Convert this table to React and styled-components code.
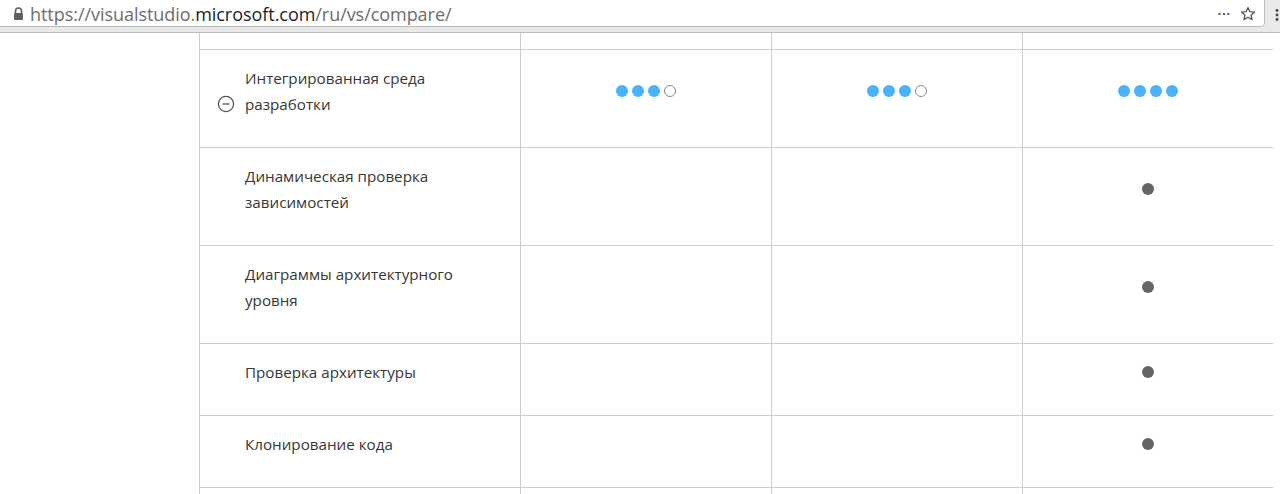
import styled, { createGlobalStyle } from "styled-components";

const GlobalStyle = createGlobalStyle`
  html, body {
    margin: 0;
    padding: 0;
    background: #fff;
    font-family: "Open Sans", "Noto Sans", sans-serif;
  }
`;

const rows = [
  { title: ["Интегрированная среда", "разработки"], group: true, cells: [3, 3, 4] },
  { title: ["Динамическая проверка", "зависимостей"], cells: [null, null, "dot"] },
  { title: ["Диаграммы архитектурного", "уровня"], cells: [null, null, "dot"] },
  { title: ["Проверка архитектуры"], cells: [null, null, "dot"] },
  { title: ["Клонирование кода"], cells: [null, null, "dot"] },
];

function LockIcon() {
  return (
    <svg width="11" height="13" viewBox="0 0 11 13">
      <path d="M2.5 6V4a3 3 0 0 1 6 0v2" fill="none" stroke="#5f5f5f" strokeWidth="1.6" />
      <rect x="1" y="6" width="9" height="7" rx="1" fill="#5f5f5f" />
    </svg>
  );
}

function StarIcon() {
  return (
    <svg width="16" height="16" viewBox="0 0 16 16">
      <path
        d="M8 1.6l1.9 4.1 4.5.5-3.4 3 1 4.4L8 11.3l-4 2.3 1-4.4-3.4-3 4.5-.5z"
        fill="none"
        stroke="#555"
        strokeWidth="1.3"
        strokeLinejoin="round"
      />
    </svg>
  );
}

function MenuIcon() {
  return (
    <svg width="4" height="14" viewBox="0 0 4 14">
      <circle cx="2" cy="2.5" r="1.4" fill="#444" />
      <circle cx="2" cy="7" r="1.4" fill="#444" />
      <circle cx="2" cy="11.5" r="1.4" fill="#444" />
    </svg>
  );
}

function MinusCircle() {
  return (
    <svg width="18" height="18" viewBox="0 0 18 18">
      <circle cx="9" cy="9" r="7.6" fill="none" stroke="#555" strokeWidth="1.3" />
      <line x1="5.5" y1="9" x2="12.5" y2="9" stroke="#555" strokeWidth="1.3" />
    </svg>
  );
}

function Rating({ value }) {
  return (
    <Dots>
      {[0, 1, 2, 3].map((i) => (
        <Dot key={i} $filled={i < value} />
      ))}
    </Dots>
  );
}

function App() {
  return (
    <>
      <GlobalStyle />
      <Toolbar>
        <UrlBox>
          <LockIcon />
          <Url>
            https://visualstudio.<b>microsoft.com</b>/ru/vs/compare/
          </Url>
          <UrlActions>
            <More>•••</More>
            <StarIcon />
          </UrlActions>
        </UrlBox>
        <Kebab>
          <MenuIcon />
        </Kebab>
      </Toolbar>
      <Page>
        <Grid>
          <Row $top>
            <Cell />
            <Cell />
            <Cell />
            <Cell />
          </Row>
          {rows.map((r, i) => (
            <Row key={i}>
              <TitleCell>
                <Toggle>{r.group && <MinusCircle />}</Toggle>
                <Title>
                  {r.title.map((t, j) => (
                    <div key={j}>{t}</div>
                  ))}
                </Title>
              </TitleCell>
              {r.cells.map((c, j) => (
                <Cell key={j}>
                  {typeof c === "number" && <Rating value={c} />}
                  {c === "dot" && <Check />}
                </Cell>
              ))}
            </Row>
          ))}
          <Row $top>
            <Cell />
            <Cell />
            <Cell />
            <Cell />
          </Row>
        </Grid>
      </Page>
    </>
  );
}

const Toolbar = styled.header`
  background: #e9e9e9;
  border-bottom: 1px solid #bdbdbd;
  display: flex;
  align-items: flex-start;
  box-sizing: border-box;
  height: 33px;
`;

const UrlBox = styled.div`
  flex: 0 0 1271px;
  height: 29px;
  margin-left: -6px;
  margin-top: -2px;
  background: #fff;
  border: 1px solid #bcbcbc;
  border-radius: 0 0 4px 0;
  box-sizing: border-box;
  display: flex;
  align-items: center;
  padding: 2px 8px 0 18px;
  gap: 6px;
`;

const Url = styled.span`
  font-size: 18px;
  color: #6d6d6d;
  letter-spacing: -0.05px;
  flex: 1;

  b {
    font-weight: normal;
    color: #1e1e1e;
  }
`;

const UrlActions = styled.div`
  display: flex;
  align-items: center;
  gap: 9px;
`;

const More = styled.span`
  font-size: 9px;
  color: #444;
  letter-spacing: 1px;
`;

const Kebab = styled.span`
  display: flex;
  margin-left: 10px;
  margin-top: 8px;
`;

const Page = styled.main`
  padding-left: 199px;
`;

const Grid = styled.div`
  width: 1074px;
`;

const Row = styled.div`
  display: grid;
  grid-template-columns: 321px 251px 251px 251px;
  border-bottom: 1px solid #cdcdcd;
  height: ${(p) => (p.$top ? "16px" : "auto")};
  overflow: hidden;
`;

const Cell = styled.div`
  border-left: 1px solid #cdcdcd;
  display: flex;
  align-items: center;
  justify-content: center;
  padding: 15px 0 30px;
  min-height: 26px;
`;

const TitleCell = styled.div`
  border-left: 1px solid #cdcdcd;
  display: flex;
  align-items: center;
  padding: 15px 0 30px 17px;
`;

const Toggle = styled.div`
  width: 18px;
  height: 18px;
  margin-right: 10px;
  align-self: flex-end;
  margin-bottom: 4px;
`;

const Title = styled.div`
  font-size: 15.2px;
  line-height: 26px;
  color: #363636;
`;

const Dots = styled.div`
  display: flex;
  gap: 4px;
`;

const Dot = styled.span`
  width: 12px;
  height: 12px;
  border-radius: 50%;
  box-sizing: border-box;
  background: ${(p) => (p.$filled ? "#4cb0fb" : "#fff")};
  border: ${(p) => (p.$filled ? "none" : "1.5px solid #8a8a8a")};
`;

const Check = styled.span`
  width: 12px;
  height: 12px;
  border-radius: 50%;
  background: #656565;
`;

export default App;
